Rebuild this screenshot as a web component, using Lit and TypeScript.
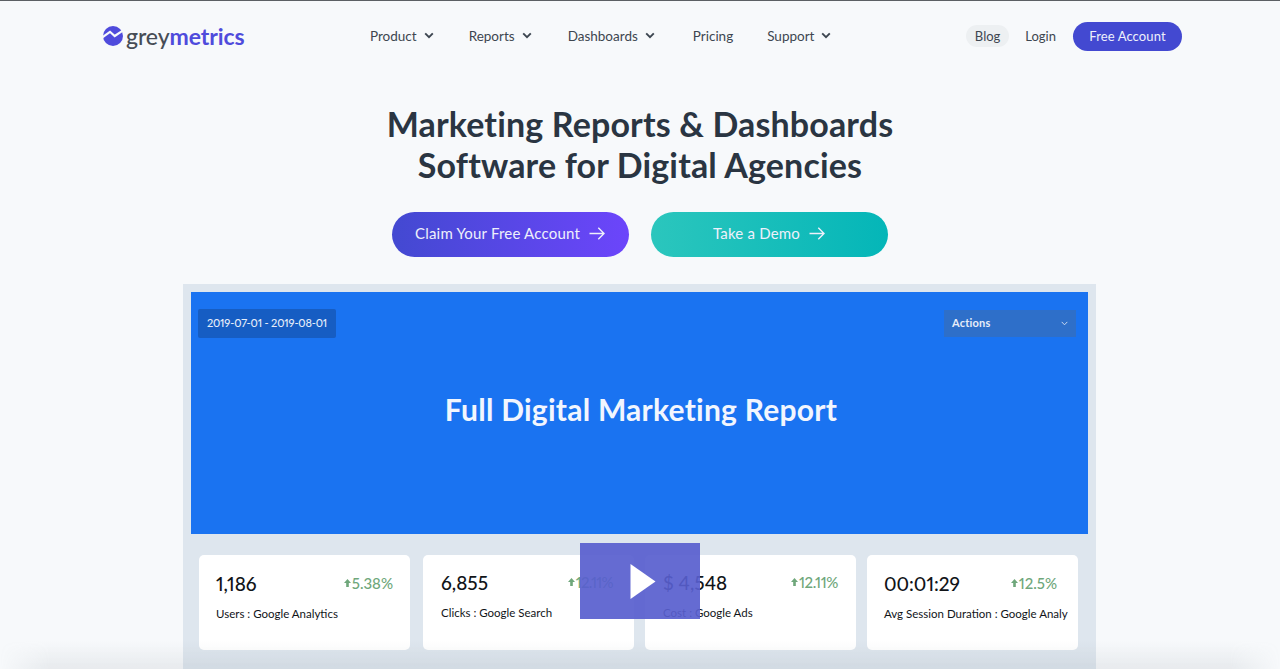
import { LitElement, html, css, svg } from "lit";
import { customElement } from "lit/decorators.js";

const chev = html`<svg class="chev" width="10" height="7" viewBox="0 0 10 7"><path d="M1.2 1.4 5 5.2 8.8 1.4" fill="none" stroke="#3d4650" stroke-width="1.9"/></svg>`;
const arrow = html`<svg class="arrow" width="16" height="13" viewBox="0 0 16 13"><path d="M0.5 6.5H15M9.3 0.8 15 6.5 9.3 12.2" fill="none" stroke="#eef0fb" stroke-width="1.4"/></svg>`;
const up = svg`<svg class="up" width="7" height="8" viewBox="0 0 8 9"><path d="M4 0 8 4.4H5.5V9H2.5V4.4H0Z" fill="#6fa77b"/></svg>`;

const cards = [
  { v: "1,186", d: "5.38%", l: "Users : Google Analytics", c: "" },
  { v: "6,855", d: "12.11%", l: "Clicks : Google Search", c: "two" },
  { v: "$ 4,548", d: "12.11%", l: "Cost : Google Ads", c: "three" },
  { v: "00:01:29", d: "12.5%", l: "Avg Session Duration : Google Analy", c: "four" },
];

@customElement("app-root")
export class AppRoot extends LitElement {
  static styles = css`
    :host { display: block; height: 669px; overflow: hidden; position: relative; background: #f7f9fb; border-top: 1px solid #5c6064; box-sizing: border-box; font-family: "Lato", "Liberation Sans", sans-serif; color: #3d4650; }
    .nav { display: flex; align-items: center; height: 70px; padding: 0 98px 0 103px; }
    .logo { display: flex; align-items: center; gap: 3px; width: 267px; font-size: 23px; font-weight: 500; letter-spacing: -0.07px; color: #474d56; line-height: 30px; }
    .logo span { margin-bottom: 1px; }
    .logo b { color: #4f4bdc; font-weight: 700; }
    .menu { display: flex; align-items: center; font-size: 13.5px; flex: 1; padding-bottom: 1px; }
    .menu a { display: flex; align-items: center; gap: 7px; }
    .m1 { margin-right: 35px; } .m2 { margin-right: 36px; } .m3 { margin-right: 38px; } .m4 { margin-right: 34px; }
    .right { display: flex; align-items: center; font-size: 13px; }
    .blog { background: #edf0f2; border-radius: 11px; padding: 3px 9px; height: 22px; box-sizing: border-box; line-height: 16px; margin-right: 16px; }
    .login { margin-right: 17px; }
    .free { background: #4349d1; color: #eef0fb; border-radius: 15px; width: 109px; height: 29px; line-height: 28px; text-align: center; letter-spacing: 0.1px; }
    h1 { margin: 32px 0 0; text-align: center; font-size: 34px; line-height: 41px; font-weight: 700; color: #2a3542; letter-spacing: 0.15px; }
    .cta { display: flex; justify-content: center; gap: 22px; margin-top: 27px; padding-right: 1px; }
    .btn { width: 237px; height: 45px; border-radius: 23px; display: flex; align-items: center; justify-content: center; gap: 9px; color: #eef0fb; font-size: 15px; letter-spacing: 0.2px; padding-bottom: 3px; box-sizing: border-box; }
    .p { background: linear-gradient(90deg, #4349d1, #6c45fb); }
    .t { background: linear-gradient(90deg, #2bc6bd, #04b6b8); }
    .frame { width: 913px; margin: 27px 0 0 183px; background: #dee6ee; padding: 8px 8px 40px; box-sizing: border-box; position: relative; }
    .blue { height: 242px; background: #1a73f1; padding: 17px 12px 0 7px; box-sizing: border-box; position: relative; }
    .top { display: flex; justify-content: space-between; align-items: flex-start; }
    .date { width: 138px; height: 29px; background: #165dc3; border-radius: 2px; color: #e6edf9; font-size: 11px; line-height: 28px; text-align: center; font-weight: 500; letter-spacing: -0.15px; font-variant-numeric: proportional-nums; }
    .act { width: 132px; height: 27px; background: #2e6fc9; color: #e6edf9; font-size: 11px; font-weight: 700; line-height: 26px; padding: 0 8px 1px; box-sizing: border-box; display: flex; justify-content: space-between; align-items: center; letter-spacing: 0.2px; margin-top: 1px; }
    h2 { margin: 54px 0 0; padding-left: 8px; text-align: center; color: #f2f6fe; font-size: 30px; line-height: 34px; font-weight: 700; letter-spacing: 0.25px; }
    .cards { display: flex; margin: 21px 0 0 8px; }
    .card { width: 211px; height: 95px; background: #fff; border-radius: 5px; margin-right: 11px; padding: 17px 17px 0; box-sizing: border-box; color: #111418; flex: none; overflow: hidden; }
    .card:first-child { margin-right: 13px; }
    .row { display: flex; justify-content: space-between; align-items: center; height: 22px; }
    .val { font-size: 19px; font-weight: 500; font-variant-numeric: proportional-nums; }
    .delta { display: flex; align-items: center; gap: 1px; color: #6fa77b; font-size: 15px; font-weight: 500; font-variant-numeric: proportional-nums; }
    .lbl { font-size: 11.5px; margin-top: 13px; line-height: 14px; white-space: nowrap; }
    .two, .three { padding-top: 16px; }
    .two .delta { letter-spacing: -0.7px; }
    .three .delta { letter-spacing: -0.4px; }
    .two { padding-left: 18px; padding-right: 21px; }
    .three { padding-left: 18px; padding-right: 18px; }
    .four .row { padding-right: 4px; }
    .play { position: absolute; left: 397px; top: 259px; width: 120px; height: 76px; box-sizing: border-box; padding-left: 6px; background: rgba(88, 94, 206, 0.92); display: flex; align-items: center; justify-content: center; }
    .fade { position: absolute; left: 0; right: 0; bottom: 0; height: 28px; background: linear-gradient(180deg, rgba(150,160,170,0), rgba(130,140,150,0.13)); pointer-events: none; -webkit-mask-image: linear-gradient(90deg, transparent, #000 50px, #000 calc(100% - 50px), transparent); mask-image: linear-gradient(90deg, transparent, #000 50px, #000 calc(100% - 50px), transparent); }
  `;

  render() {
    return html`
      <div class="nav">
        <div class="logo">
          <svg width="20" height="20" viewBox="0 0 20 20">
            <circle cx="10" cy="10" r="10" fill="#4f4bdc"/>
            <path d="M-1 11.5 7 5.8 11.7 10 21 3.8" fill="none" stroke="#f7f9fb" stroke-width="2.2"/>
          </svg>
          <span>grey<b>metrics</b></span>
        </div>
        <div class="menu">
          <a class="m1">Product ${chev}</a>
          <a class="m2">Reports ${chev}</a>
          <a class="m3">Dashboards ${chev}</a>
          <a class="m4">Pricing</a>
          <a>Support ${chev}</a>
        </div>
        <div class="right">
          <span class="blog">Blog</span>
          <span class="login">Login</span>
          <span class="free">Free Account</span>
        </div>
      </div>
      <h1>Marketing Reports &amp; Dashboards<br />Software for Digital Agencies</h1>
      <div class="cta">
        <div class="btn p">Claim Your Free Account ${arrow}</div>
        <div class="btn t">Take a Demo ${arrow}</div>
      </div>
      <div class="frame">
        <div class="blue">
          <div class="top">
            <div class="date">2019-07-01 - 2019-08-01</div>
            <div class="act">Actions
              <svg width="7" height="5" viewBox="0 0 7 5"><path d="M.7.9 3.5 3.8 6.3.9" fill="none" stroke="#c9d8ef" stroke-width="1"/></svg>
            </div>
          </div>
          <h2>Full Digital Marketing Report</h2>
        </div>
        <div class="cards">
          ${cards.map(
            (c) => html`<div class="card ${c.c}">
              <div class="row"><span class="val">${c.v}</span><span class="delta">${up}${c.d}</span></div>
              <div class="lbl">${c.l}</div>
            </div>`
          )}
        </div>
        <div class="play">
          <svg width="26" height="35" viewBox="0 0 26 35"><path d="M0.5 0 25.5 17.5 0.5 35Z" fill="#fff"/></svg>
        </div>
      </div>
      <div class="fade"></div>
    `;
  }
}
